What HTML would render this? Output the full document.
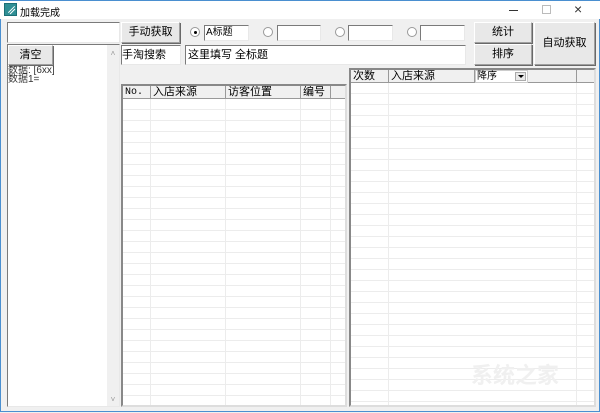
<!DOCTYPE html><html><head><meta charset="utf-8"><style>
*{box-sizing:border-box;margin:0;padding:0}
body{width:600px;height:413px;background:#f0f0f0;font-family:"Liberation Sans","Noto Sans CJK SC",sans-serif;font-size:11px;color:#000;position:relative;overflow:hidden}
.a{position:absolute}
.win{left:0;top:0;width:600px;height:412px;border:1px solid #4a8fd0;border-top:none}
.title{left:0;top:0;width:600px;height:19px;background:#fff;border-top:1px solid #4a8fd0}
.inp{background:#fff;border-top:1px solid #7a7a7a;border-left:1px solid #7a7a7a;border-right:1px solid #e8e8e8;border-bottom:1px solid #e8e8e8;padding:1px 2px;line-height:16px;white-space:nowrap;overflow:hidden}
.btn{background:#e8e8e8;border:1px solid #fff;border-right-color:#a0a0a0;border-bottom-color:#a0a0a0;box-shadow:1px 1px 0 #696969;text-align:center;line-height:19px}
.rad{width:10px;height:10px;border-radius:50%;border:1px solid #999;background:#fff}
.list{background:#fff;border:2px solid #888;border-right-color:#ddd;border-bottom-color:#ddd;overflow:hidden}
.rows{background-image:repeating-linear-gradient(to bottom,transparent 0 10px,#ececec 10px 11px)}
.hd{background:#f0f0f0;border-right:1px solid #999;border-bottom:1px solid #999;height:13px;line-height:13px;padding-left:2px;font-size:11px;overflow:hidden;white-space:nowrap}
.vl{width:1px;background:#ececec}
</style></head><body>
<div class="a win"></div>
<div class="a title">
 <div class="a" style="left:4px;top:2px;width:13px;height:13px;background:#2f8f95;border:1px solid #1b6f76"><div class="a" style="left:2px;top:5px;width:9px;height:1px;background:#fff;transform:rotate(-45deg)"></div><div class="a" style="left:4px;top:7px;width:7px;height:1px;background:#fff;transform:rotate(-45deg)"></div></div>
 <div class="a" style="left:20px;top:3px;font-size:10px">加载完成</div>
 <div class="a" style="left:509px;top:9px;width:9px;height:1px;background:#333"></div>
 <div class="a" style="left:542px;top:4px;width:9px;height:9px;border:1px solid #bbb"></div>
 <div class="a" style="left:574px;top:0px;font-size:14px;color:#333">×</div>
</div>
<div class="a inp" style="left:7px;top:22px;width:113px;height:21px"></div>
<div class="a inp" style="left:7px;top:44px;width:113px;height:363px;font-size:10px;line-height:9px;padding:0">
 <div class="a" style="left:0;top:3px;color:#333">数据: 采集<br>数据: [6xx]<br>数据: [6xx]<br>数据1=</div>
 <div class="a" style="right:0;top:0;width:12px;height:361px;background:#f0f0f0;color:#999;text-align:center;font-size:8px"><div style="position:absolute;top:4px;width:12px">˄</div><div style="position:absolute;bottom:2px;width:12px">˅</div></div>
</div>
<div class="a btn" style="left:8px;top:45px;width:45px;height:20px">清空</div>
<div class="a btn" style="left:121px;top:22px;width:59px;height:21px">手动获取</div>
<div class="a rad" style="left:190px;top:27px"><div class="a" style="left:3px;top:3px;width:3px;height:3px;background:#000;border-radius:50%"></div></div>
<div class="a inp" style="left:204px;top:25px;width:45px;height:16px;line-height:13px;padding:0 1px;font-size:10px">A标题</div>
<div class="a rad" style="left:263px;top:27px"></div>
<div class="a inp" style="left:277px;top:25px;width:44px;height:16px"></div>
<div class="a rad" style="left:335px;top:27px"></div>
<div class="a inp" style="left:348px;top:25px;width:45px;height:16px"></div>
<div class="a rad" style="left:407px;top:27px"></div>
<div class="a inp" style="left:420px;top:25px;width:45px;height:16px"></div>
<div class="a btn" style="left:474px;top:22px;width:58px;height:21px">统计</div>
<div class="a btn" style="left:474px;top:44px;width:58px;height:21px">排序</div>
<div class="a btn" style="left:534px;top:22px;width:61px;height:43px;line-height:41px">自动获取</div>
<div class="a inp" style="left:121px;top:45px;width:60px;height:20px;padding:1px 0">手淘搜索</div>
<div class="a inp" style="left:185px;top:45px;width:281px;height:20px">这里填写 全标题</div>

<div class="a list" style="left:121px;top:84px;width:226px;height:323px">
 <div class="a rows" style="left:0;top:13px;width:224px;height:310px"></div>
 <div class="a vl" style="left:27px;top:13px;height:310px"></div><div class="a vl" style="left:102px;top:13px;height:310px"></div><div class="a vl" style="left:177px;top:13px;height:310px"></div><div class="a vl" style="left:207px;top:13px;height:310px"></div>
 <div class="a hd" style="left:0;top:0;width:28px;font-family:'Liberation Mono',monospace;font-size:10px">No.</div>
 <div class="a hd" style="left:28px;top:0;width:75px">入店来源</div>
 <div class="a hd" style="left:103px;top:0;width:75px">访客位置</div>
 <div class="a hd" style="left:178px;top:0;width:30px">编号</div>
 <div class="a hd" style="left:208px;top:0;width:16px;border-right:none"></div>
</div>
<div class="a list" style="left:349px;top:68px;width:247px;height:339px">
 <div class="a rows" style="left:0;top:13px;width:245px;height:326px"></div>
 <div class="a vl" style="left:37px;top:13px;height:326px"></div><div class="a vl" style="left:225px;top:13px;height:326px"></div>
 <div class="a hd" style="left:0;top:0;width:38px">次数</div>
 <div class="a hd" style="left:38px;top:0;width:86px">入店来源</div>
 <div class="a" style="left:124px;top:0;width:53px;height:13px;background:#fff;border:1px solid #ccc;font-size:10px;line-height:11px;padding-left:1px">降序<div class="a" style="right:1px;top:1px;width:11px;height:9px;background:#e8e8e8;border:1px solid #aaa"><div class="a" style="left:2px;top:2px;border-left:3px solid transparent;border-right:3px solid transparent;border-top:3px solid #000"></div></div></div>
 <div class="a hd" style="left:177px;top:0;width:49px"></div>
 <div class="a hd" style="left:226px;top:0;width:19px;border-right:none"></div>
 <div class="a" style="left:120px;top:288px;font-size:22px;color:#f0f0f0;font-weight:bold">系统之家</div>
</div>
</body></html>
